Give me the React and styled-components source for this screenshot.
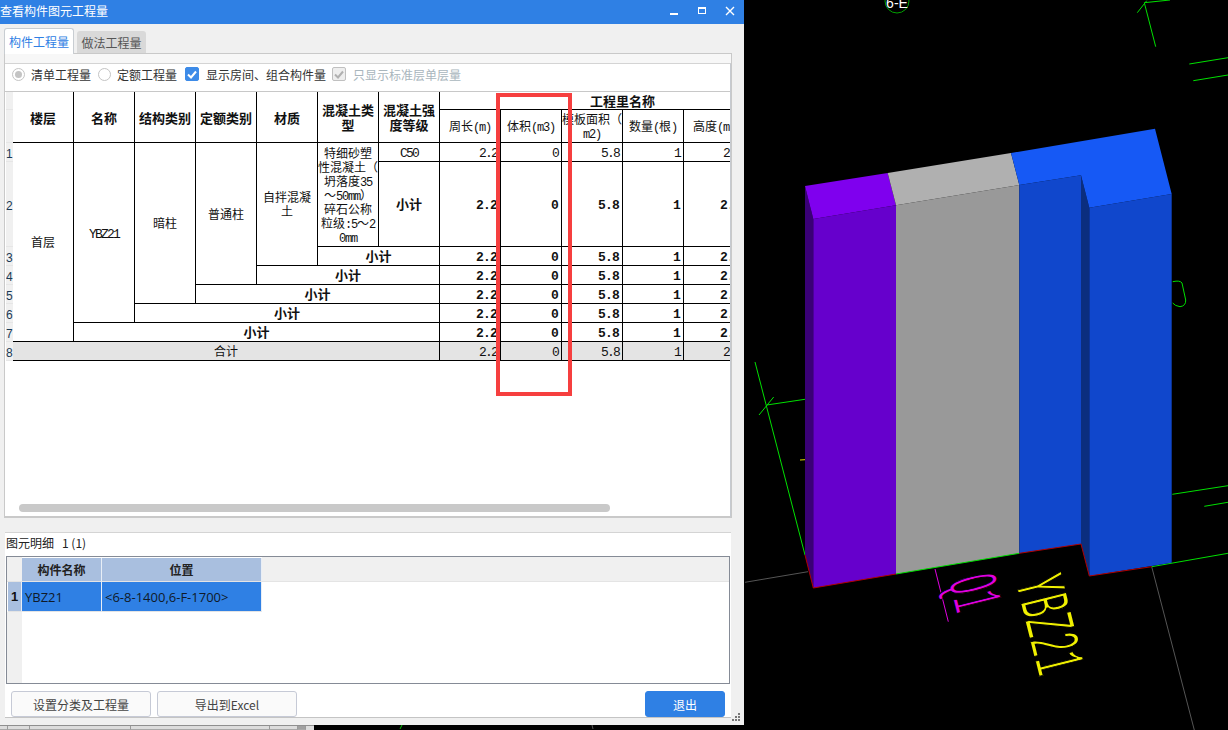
import React from 'react';
import styled, { createGlobalStyle } from 'styled-components';

const Global = createGlobalStyle`
  html, body { margin: 0; padding: 0; background: #000; }
  body { width: 1228px; height: 730px; overflow: hidden; font-family: "Noto Sans CJK SC", "Liberation Sans", sans-serif; font-size: 12px; }
  * { box-sizing: border-box; }
`;
const Page = styled.div`display: flex; width: 1228px; height: 730px; background: #000; overflow: hidden;`;
const LeftCol = styled.div`width: 744px; flex: none; display: flex; flex-direction: column;`;
const Win = styled.div`position: relative; height: 725px; background: #f0f0f0; display: flex; flex-direction: column;`;
const TitleBar = styled.div`height: 24px; flex: none; background: #2f80e4; color: #fff; display: flex; align-items: center; justify-content: space-between; padding: 0 6px 4px 0; font-size: 12px;`;
const WinBtns = styled.div`display: flex; gap: 12px; align-items: center;`;
const Body = styled.div`flex: 1; min-height: 0; padding: 4px 12px 7px 4px; display: flex; flex-direction: column;`;
const Tabs = styled.div`display: flex; align-items: flex-end; height: 25px; flex: none; gap: 3px; position: relative; z-index: 1;`;
const Tab = styled.div`
  width: ${p => p.$active ? 70 : 69}px; height: ${p => p.$active ? 26 : 22}px;
  margin-bottom: ${p => p.$active ? -1 : 0}px;
  background: ${p => p.$active ? '#fff' : '#d9d9d9'};
  color: ${p => p.$active ? '#2f80e4' : '#555'};
  border: ${p => p.$active ? '1px solid #c8cdd2' : 'none'};
  border-bottom: none; border-radius: 3px 3px 0 0;
  display: flex; align-items: center; justify-content: center; font-size: 12px;
`;
const TabPane = styled.div`height: 465px; flex: none; border: 1px solid #c9c9c9; border-bottom: none; padding: 9px 0 0 0; background: #f7f7f7;`;
const TopPanel = styled.div`height: 455px; background: #fff; border-top: 1px solid #d4d4d4; border-bottom: 2px solid #c9c9c9; border-right: 1px solid #c6cad0; display: flex; flex-direction: column; position: relative;`;
const Options = styled.div`height: 28px; flex: none; display: flex; align-items: center; padding: 0 0 7px 7px; border-bottom: 1px solid #c8c8c8; color: #333; font-size: 12px;`;
const Radio = styled.span`
  width: 13px; height: 13px; border-radius: 50%; border: 1px solid #c4c4c4; background: #fff; flex: none;
  display: flex; align-items: center; justify-content: center; margin-right: ${p => p.$mr}px;
  &::after { content: ''; width: 7px; height: 7px; border-radius: 50%; background: ${p => p.$on ? '#c4c4c4' : 'transparent'}; }
`;
const OptLabel = styled.span`color: ${p => p.$dim ? '#a9b6bd' : '#333'}; margin-right: ${p => p.$mr}px; white-space: nowrap;`;
const Check = styled.span`
  width: 14px; height: 14px; flex: none; border-radius: 2px; margin-right: 7px;
  background: ${p => p.$dim ? '#eeeeee' : '#3d8be8'}; border: 1px solid ${p => p.$dim ? '#c0c0c0' : '#3d8be8'};
  display: flex; align-items: center; justify-content: center;
`;
const GridClip = styled.div`margin-left: 1px; height: 411px; overflow: hidden; display: flex; align-items: flex-start;`;
const RowNums = styled.div`width: 7px; flex: none; background: #f0f0f0; display: flex; flex-direction: column; color: #444; font-family: "Liberation Sans", sans-serif; font-size: 12px;`;
const RowNum = styled.div`height: ${p => p.$h}px; padding-top: 3px; display: flex; align-items: center; overflow: hidden; border-bottom: 1px solid #e6e6e6; color: #1a3a55;`;
const Sheet = styled.table`
  border-collapse: separate; border-spacing: 0; table-layout: fixed; width: 793px; flex: none;
  color: #111; font-size: 12px; line-height: 14px;
`;
const Cell = styled.td`
  border-right: 1px solid #000; border-bottom: 1px solid #000; padding: 0; text-align: center; overflow: hidden;
  background: ${p => p.$total ? '#e4e4e4' : '#fff'};
  font-weight: ${p => p.$bold ? 700 : 400};
  font-size: ${p => p.$bold ? 13 : 12}px;
`;
const HeadCell = styled(Cell).attrs({ as: 'th' })`font-weight: 700; font-size: 13px; line-height: 15px;`;
const SubHead = styled(Cell).attrs({ as: 'th' })`font-weight: 400; font-size: 12px; line-height: 14px; white-space: nowrap;`;
const Num = styled(Cell)`
  text-align: right; padding: 3px 3px 0 0; white-space: nowrap;
  font-family: "Liberation Mono", monospace; line-height: 12px;
  font-size: 13px; letter-spacing: ${p => p.$bold ? -0.8 : -1.8}px;
`;
const Code = styled.span`font-family: "Liberation Mono", monospace; font-size: 13px; letter-spacing: -1.8px; line-height: 10px;`;
const Half = styled.span`font-family: "Liberation Mono", monospace; font-size: 12px; letter-spacing: -1.2px; line-height: 9px;`;
const ThinScroll = styled.div`position: absolute; left: 14px; top: 440px; width: 591px; height: 8px; background: #c9c9c9; border-radius: 4px;`;
const Marker = styled.div`position: absolute; left: 496px; top: 93px; width: 76px; height: 303px; border: 4px solid #f63f3f; pointer-events: none; z-index: 3;`;
const Gap = styled.div`height: 14px; flex: none; background: #f0f0f0;`;
const BottomPanel = styled.div`flex: 1; min-height: 0; margin-left: 1px; width: 726px; background: #fff; border-top: 1px solid #d4d4d4; border-bottom: 1px solid #c4c4c4; display: flex; flex-direction: column;`;
const DetailTitle = styled.div`height: 23px; flex: none; padding: 0 0 5px 1px; display: flex; align-items: center; gap: 8px; color: #222; font-size: 12px; white-space: nowrap;`;
const Detail = styled.div`height: 128px; flex: none; width: 724px; margin-left: 1px; border: 1px solid #858b96; display: grid; grid-template-columns: 15px 80px 160px 1fr; grid-template-rows: 25px 30px 1fr; background: #fff;`;
const Corner = styled.div`background: #f0f0f0; border-bottom: 1px solid #e4e4e4;`;
const ColHead = styled.div`background: ${p => p.$empty ? '#f0f0f0' : '#a9bfdf'}; border-right: ${p => p.$empty ? 0 : 1}px solid #e8eef6; border-bottom: 1px solid #e4e4e4; margin-top: ${p => p.$empty ? 0 : 1}px; display: flex; align-items: center; justify-content: center; font-weight: 700; color: #222; font-size: 12px;`;
const RowHead = styled.div`background: #a9bfdf; border-right: 1px solid #e8eef6; border-bottom: 1px solid #e4e4e4; margin-left: 1px; display: flex; align-items: center; justify-content: center; font-weight: 700; font-size: 13px; color: #111; font-family: "Liberation Sans", sans-serif;`;
const SelCell = styled.div`background: #2f80e4; border-right: 1px solid #e8eef6; border-bottom: 1px solid #e4e4e4; display: flex; align-items: center; padding-left: 3px; color: #101a28; font-family: "Open Sans", "Liberation Sans", sans-serif; font-size: 13px; white-space: nowrap;`;
const Filler = styled.div`background: ${p => p.$side ? '#f0f0f0' : '#fff'};`;
const Actions = styled.div`flex: 1; display: flex; align-items: flex-start; padding: 7px 6px 0 6px; gap: 6px;`;
const Btn = styled.div`
  width: ${p => p.$primary ? 80 : 140}px; height: 26px; border-radius: 3px;
  border: 1px solid ${p => p.$primary ? '#2f80e4' : '#c6cad6'};
  background: ${p => p.$primary ? '#2f80e4' : '#fafafa'};
  color: ${p => p.$primary ? '#fff' : '#444'};
  margin-left: ${p => p.$primary ? 'auto' : 0};
  display: flex; align-items: center; justify-content: center; font-size: 12px;
`;
const Grip = styled.svg`position: absolute; right: 4px; bottom: 4px;`;
const Strip = styled.div`height: 5px; flex: none; display: flex; background: #000;`;
const StripGrey = styled.div`width: 314px; flex: none; background: #dcdcdc; border-top: 1px solid #8f8f8f; display: flex;`;
const StripCell = styled.div`width: ${p => p.$w}px; flex: none; border-right: 1px solid #9a9a9a; border-bottom: 1px solid #a8a8a8; background: ${p => p.$dark ? '#a0a0a0' : 'transparent'};`;
const Scene = styled.svg`width: 484px; height: 730px; flex: none; display: block; background: #000;`;

const vals = ['2.2', '0', '5.8', '1', '2.2'];
const NumCells = ({ bold, total }) => (
  <>
    {vals.map((v, i) => <Num key={i} $bold={bold} $total={total}>{v}</Num>)}
    <Num $bold={bold} $total={total} />
  </>
);
const Sub = ({ span, total, children, bold = true }) => <Cell colSpan={span} $bold={bold} $total={total}>{children}</Cell>;
const headH = [18, 33];
const rowH = [19, 85, 19, 19, 19, 19, 19, 19];
const colCount = 13;

function Scene3D() {
  const ox = 744;
  const pts = a => a.map(([x, y]) => `${x - ox},${y}`).join(' ');
  const line = (x1, y1, x2, y2, c, w = 1) => <line x1={x1 - ox} y1={y1} x2={x2 - ox} y2={y2} stroke={c} strokeWidth={w} />;
  const G = '#00e000';
  const R = '#b00000';
  return (
    <Scene viewBox="0 0 484 730">
      {line(1144.3, 2.7, 1155.7, 46.7, G)}
      {line(1144.3, 2.7, 1170, 0, G)}
      {line(1137.3, 12.7, 1146.7, 0.7, G)}
      {line(1189.3, 64, 1228, 57.7, G)}
      {line(1193.3, 80.7, 1228, 75, G)}
      <path d={`M${1172.7 - ox} 281.7 Q${1180 - ox} 280 ${1182 - ox} 283 L${1185.7 - ox} 300 Q${1186 - ox} 306 ${1180 - ox} 306.7 Q${1175 - ox} 306 ${1172.7 - ox} 303`} fill="none" stroke={G} strokeWidth="1" />
      <circle cx={897 - ox} cy={1} r={12} fill="none" stroke="#00a000" strokeWidth="1" />
      <text x={897 - ox} y={8} fill="#fff" fontFamily="Liberation Sans" fontSize="14" textAnchor="middle">6-E</text>
      {line(755, 362, 805, 555, G)}
      {line(766.7, 405, 805, 399.3, G)}
      {line(759, 415, 773.7, 397, G)}
      {line(800, 460, 805, 459.7, '#e0e000')}
      {line(745, 582.3, 808, 571.7, '#555')}
      {line(1151.7, 566.7, 1194.3, 730, '#555')}
      {line(1151.7, 566.7, 1228, 553.3, G)}
      {line(1172.3, 494.3, 1228, 485.7, G)}
      {line(1204.3, 506.3, 1228, 502.3, G)}

      <polygon points={pts([[805, 186], [813.3, 219], [813.3, 588], [805, 555]])} fill="#3a0076" />
      <polygon points={pts([[813.3, 219], [896, 205.3], [896, 574], [813.3, 588]])} fill="#6600cc" />
      <polygon points={pts([[896, 205.3], [1019.3, 185], [1019.3, 553.3], [896, 574]])} fill="#999999" />
      <polygon points={pts([[1019.3, 185], [1081, 175.3], [1081, 544], [1019.3, 553.3]])} fill="#1047cc" />
      <polygon points={pts([[1081, 175.3], [1089.3, 207.7], [1089.3, 576], [1081, 544]])} fill="#0b2e7f" />
      <polygon points={pts([[1089.3, 207.7], [1171.7, 194], [1171.7, 562.7], [1089.3, 576]])} fill="#1047cc" />
      <polygon points={pts([[805, 186], [887.7, 173], [896, 205.3], [813.3, 219]])} fill="#7f00ee" />
      <polygon points={pts([[887.7, 173], [1011, 153], [1019.3, 185], [896, 205.3]])} fill="#b0b0b0" />
      <polygon points={pts([[1011, 153], [1155, 128.7], [1171.7, 194], [1089.3, 207.7], [1081, 175.3], [1019.3, 185]])} fill="#1659f5" />

      {line(805, 555, 813.3, 588, R)}
      {line(813.3, 588, 896, 574, R)}
      {line(896, 574, 1019.3, 553.3, G)}
      {line(1019.3, 553.3, 1081, 544, R)}
      {line(1081, 544, 1089.3, 576, R)}
      {line(1089.3, 576, 1151.7, 566.7, R)}

      {line(935, 569, 948.3, 621.7, '#e000e0')}
      <text transform={`translate(${948 - ox} 581) rotate(76) scale(1 2.5)`} fill="#e000e0" stroke="#000" strokeWidth="0.8" fontFamily="Liberation Mono" fontSize="29">Q1</text>
      <text transform={`translate(${1015 - ox} 582) rotate(76) scale(1 2.2)`} fill="#f0f000" stroke="#000" strokeWidth="0.9" fontFamily="Liberation Mono" fontSize="33">YBZ21</text>
    </Scene>
  );
}

export default function App() {
  return (
    <Page>
      <Global />
      <LeftCol>
        <Win>
          <TitleBar>
            <span>查看构件图元工程量</span>
            <WinBtns>
              <svg width="16" height="12" viewBox="0 0 16 12"><rect x="4" y="9" width="8" height="2" fill="#fff" /></svg>
              <svg width="16" height="12" viewBox="0 0 16 12"><rect x="4.5" y="3.5" width="7" height="6" fill="none" stroke="#fff" /><rect x="4" y="3" width="8" height="2" fill="#fff" /></svg>
              <svg width="16" height="12" viewBox="0 0 16 12"><path d="M4 3 L12 11 M12 3 L4 11" stroke="#fff" strokeWidth="1.4" /></svg>
            </WinBtns>
          </TitleBar>
          <Body>
            <Tabs>
              <Tab $active>构件工程量</Tab>
              <Tab>做法工程量</Tab>
            </Tabs>
            <TabPane>
              <TopPanel>
                <Options>
                  <Radio $on $mr={6} />
                  <OptLabel $mr={7}>清单工程量</OptLabel>
                  <Radio $mr={6} />
                  <OptLabel $mr={8}>定额工程量</OptLabel>
                  <Check><svg width="10" height="9" viewBox="0 0 10 9"><path d="M1 4.5 L4 7.5 L9 1.5" fill="none" stroke="#fff" strokeWidth="2" /></svg></Check>
                  <OptLabel $mr={6}>显示房间、组合构件量</OptLabel>
                  <Check $dim><svg width="10" height="9" viewBox="0 0 10 9"><path d="M1 4.5 L4 7.5 L9 1.5" fill="none" stroke="#b0b0b0" strokeWidth="2" /></svg></Check>
                  <OptLabel $dim>只显示标准层单层量</OptLabel>
                </Options>
                <GridClip>
                  <RowNums>
                    {headH.map((h, i) => <RowNum key={i} $h={h} />)}
                    {rowH.map((h, i) => <RowNum key={i} $h={h}>{i + 1}</RowNum>)}
                  </RowNums>
                  <Sheet>
                    <colgroup>
                      {Array.from({ length: colCount }, (_, i) => <col key={i} style={{ width: 61 }} />)}
                    </colgroup>
                    <thead>
                      <tr style={{ height: headH[0] }}>
                        <HeadCell rowSpan={2}>楼层</HeadCell>
                        <HeadCell rowSpan={2}>名称</HeadCell>
                        <HeadCell rowSpan={2}>结构类别</HeadCell>
                        <HeadCell rowSpan={2}>定额类别</HeadCell>
                        <HeadCell rowSpan={2}>材质</HeadCell>
                        <HeadCell rowSpan={2}>混凝土类型</HeadCell>
                        <HeadCell rowSpan={2}>混凝土强度等级</HeadCell>
                        <HeadCell colSpan={6}>工程里名称</HeadCell>
                      </tr>
                      <tr style={{ height: headH[1] }}>
                        <SubHead>周长<Half>(m)</Half></SubHead>
                        <SubHead>体积<Half>(m3)</Half></SubHead>
                        <SubHead>模板面积（<br /><Half>m2)</Half></SubHead>
                        <SubHead>数量<Half>(</Half>根<Half>)</Half></SubHead>
                        <SubHead>高度<Half>(m)</Half></SubHead>
                        <SubHead />
                      </tr>
                    </thead>
                    <tbody>
                      <tr style={{ height: rowH[0] }}>
                        <Cell rowSpan={7}>首层</Cell>
                        <Cell rowSpan={6}><Code>YBZ21</Code></Cell>
                        <Cell rowSpan={5}>暗柱</Cell>
                        <Cell rowSpan={4}>普通柱</Cell>
                        <Cell rowSpan={3}>自拌混凝<br />土</Cell>
                        <Cell rowSpan={2}>特细砂塑<br />性混凝土（<br />坍落度<Half>35</Half><br />～<Half>50mm</Half>）<br />碎石公称<br />粒级<Half>:5</Half>～<Half>2</Half><br /><Half>0mm</Half></Cell>
                        <Cell><Code>C50</Code></Cell>
                        <NumCells />
                      </tr>
                      <tr style={{ height: rowH[1] }}>
                        <Sub>小计</Sub>
                        <NumCells bold />
                      </tr>
                      <tr style={{ height: 19 }}><Sub span={2}>小计</Sub><NumCells bold /></tr>
                      <tr style={{ height: 19 }}><Sub span={3}>小计</Sub><NumCells bold /></tr>
                      <tr style={{ height: 19 }}><Sub span={4}>小计</Sub><NumCells bold /></tr>
                      <tr style={{ height: 19 }}><Sub span={5}>小计</Sub><NumCells bold /></tr>
                      <tr style={{ height: 19 }}><Sub span={6}>小计</Sub><NumCells bold /></tr>
                      <tr style={{ height: 19 }}><Sub span={7} total bold={false}>合计</Sub><NumCells total /></tr>
                    </tbody>
                  </Sheet>
                </GridClip>
                <ThinScroll />
              </TopPanel>
            </TabPane>
            <Gap />
            <BottomPanel>
              <DetailTitle><span>图元明细</span><span>1 (1)</span></DetailTitle>
              <Detail>
                <Corner />
                <ColHead>构件名称</ColHead>
                <ColHead>位置</ColHead>
                <ColHead $empty />
                <RowHead>1</RowHead>
                <SelCell>YBZ21</SelCell>
                <SelCell>&lt;6-8-1400,6-F-1700&gt;</SelCell>
                <Filler />
                <Filler $side />
                <Filler />
                <Filler />
                <Filler />
              </Detail>
              <Actions>
                <Btn>设置分类及工程量</Btn>
                <Btn>导出到Excel</Btn>
                <Btn $primary>退出</Btn>
              </Actions>
            </BottomPanel>
          </Body>
          <Grip width="8" height="8" viewBox="0 0 8 8" fill="#777">
            <rect x="6" y="0" width="2" height="2" /><rect x="3" y="3" width="2" height="2" /><rect x="6" y="3" width="2" height="2" /><rect x="0" y="6" width="2" height="2" /><rect x="3" y="6" width="2" height="2" /><rect x="6" y="6" width="2" height="2" />
          </Grip>
          <Marker />
        </Win>
        <Strip>
          <StripGrey>
            <StripCell $w={8} />
            <StripCell $w={22} />
            <StripCell $w={101} />
            <StripCell $w={139} />
            <StripCell $w={28} />
            <StripCell $w={8} $dark />
          </StripGrey>
          <svg width="430" height="5" viewBox="0 0 430 5">
            <path d="M86 4 L88 0" stroke="#00c000" fill="none" />
            <path d="M278 0 L279 4" stroke="#555" fill="none" />
          </svg>
        </Strip>
      </LeftCol>
      <Scene3D />
    </Page>
  );
}
